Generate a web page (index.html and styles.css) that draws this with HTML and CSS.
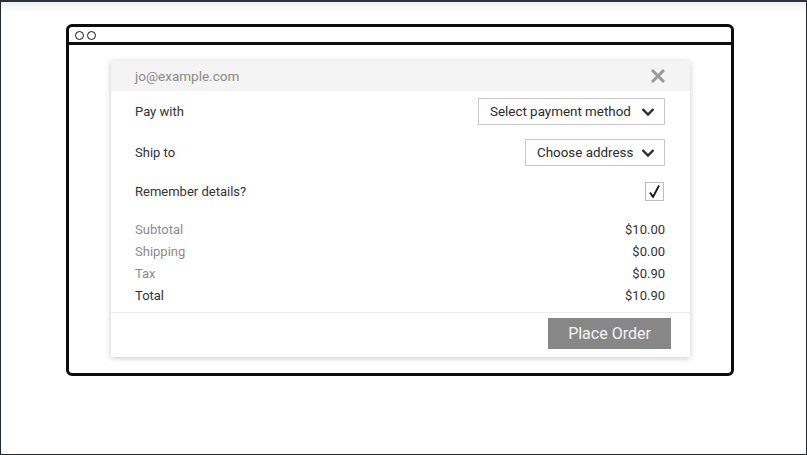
FILE: index.html
```html
<!DOCTYPE html>
<html>
<head>
<meta charset="utf-8">
<link rel="stylesheet" href="styles.css">
</head>
<body>
<div class="screen">
  <div class="window">
    <div class="titlebar">
      <span class="dot"></span><span class="dot"></span>
    </div>
    <div class="content">
      <div class="modal">
        <div class="modal-head">
          <span class="email">jo@example.com</span>
          <svg class="close" width="16" height="16" viewBox="0 0 16 16"><path d="M2 2 L14 14 M14 2 L2 14" stroke="#9a9a9a" stroke-width="3" fill="none"/></svg>
        </div>
        <div class="modal-body">
          <div class="row">
            <span class="label">Pay with</span>
            <div class="select select-pay"><span>Select payment method</span>
              <svg width="14" height="10" viewBox="0 0 14 10"><path d="M1.5 2 L7 7.5 L12.5 2" stroke="#2b2b2b" stroke-width="2.4" fill="none"/></svg>
            </div>
          </div>
          <div class="row row-gap">
            <span class="label">Ship to</span>
            <div class="select select-ship"><span>Choose address</span>
              <svg width="14" height="10" viewBox="0 0 14 10"><path d="M1.5 2 L7 7.5 L12.5 2" stroke="#2b2b2b" stroke-width="2.4" fill="none"/></svg>
            </div>
          </div>
          <div class="row row-check">
            <span class="label">Remember details?</span>
            <span class="checkbox"><svg width="13" height="15" viewBox="0 0 13 15"><path d="M2 8.5 L5 13 L11 1.5" stroke="#1c1c1c" stroke-width="1.9" fill="none" stroke-linejoin="round"/></svg></span>
          </div>
          <div class="summary">
            <div class="line muted"><span>Subtotal</span><span class="val">$10.00</span></div>
            <div class="line muted"><span>Shipping</span><span class="val">$0.00</span></div>
            <div class="line muted"><span>Tax</span><span class="val">$0.90</span></div>
            <div class="line"><span>Total</span><span class="val">$10.90</span></div>
          </div>
        </div>
        <div class="modal-foot">
          <button class="order">Place Order</button>
        </div>
      </div>
    </div>
  </div>
</div>
</body>
</html>
```
FILE: styles.css
```css
* { box-sizing: border-box; }
html, body { margin: 0; padding: 0; }
body { font-family: Roboto, "Liberation Sans", sans-serif; background: #fff; }
.screen {
  width: 807px; height: 455px;
  border: 1px solid #1f2934;
  border-top: 2px solid #2a333d;
  box-shadow: inset 0 10px 12px -8px rgba(0,0,0,0.10);
  padding: 22px 0 0 65px;
  background: #fff;
}
.window {
  width: 668px; height: 352px;
  border: 3px solid #0c0c0c;
  border-radius: 6px;
}
.titlebar {
  height: 18px;
  border-bottom: 3px solid #0c0c0c;
  display: flex; align-items: center;
  padding: 1px 0 0 6px; gap: 3px;
}
.dot {
  width: 9px; height: 9px; border: 1.6px solid #111; border-radius: 50%;
}
.content { padding: 16px 0 0 42px; }
.modal {
  width: 579px; height: 296px;
  background: #fff;
  box-shadow: 0 1px 6px rgba(0,0,0,0.22);
}
.modal-head {
  height: 30px; background: #f4f4f4;
  display: flex; align-items: center; justify-content: space-between;
  padding: 0 25px 0 24px;
}
.email { color: #8a8a8a; font-size: 13.5px; }
.close { display: block; margin-right: -1px; }
.modal-body { padding: 7px 25px 0 24px; }
.row { height: 27px; display: flex; align-items: center; justify-content: space-between; }
.row-gap { margin-top: 14px; }
.row-check { margin-top: 12px; }
.label { font-size: 13px; color: #333; }
.select {
  height: 27px; border: 1px solid #c9c9c9;
  display: flex; align-items: center; justify-content: space-between;
  padding: 0 9px 0 11px;
  font-size: 13.4px; color: #2b2b2b; white-space: nowrap;
}
.select-pay { width: 187px; }
.select-ship { width: 140px; }
.select svg { display: block; }
.checkbox {
  width: 19px; height: 19px; border: 1px solid #bdbdbd;
  display: flex; align-items: center; justify-content: center;
  margin-right: 1px;
}
.checkbox svg { display: block; }
.summary { margin-top: 13px; padding-bottom: 6px; }
.line { height: 22px; display: flex; align-items: center; justify-content: space-between; font-size: 13px; color: #333; }
.line.muted span:first-child { color: #8c8c8c; }
.val { color: #333; }
.modal-foot {
  border-top: 1px solid #ececec;
  padding: 5px 19px 8px 0;
  display: flex; justify-content: flex-end;
}
.order {
  width: 123px; height: 31px; border: none;
  background: #878787; color: #f4f4f4;
  font-family: Roboto, "Liberation Sans", sans-serif; font-size: 16px;
  padding: 0;
}
```
